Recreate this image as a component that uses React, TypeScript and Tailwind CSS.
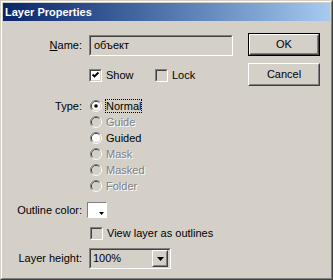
import type { ReactNode } from 'react'

function Sunken({ className = '', inner = '', children }: { className?: string; inner?: string; children?: ReactNode }) {
  return (
    <span className={`flex border border-t-[#808080] border-l-[#808080] border-b-white border-r-white ${className}`}>
      <span className={`flex flex-1 border border-t-[#404040] border-l-[#404040] border-b-[#d4d0c8] border-r-[#d4d0c8] ${inner}`}>
        {children}
      </span>
    </span>
  )
}

function Raised({ className = '', children }: { className?: string; children?: ReactNode }) {
  return (
    <span className={`flex border border-t-white border-l-white border-b-[#404040] border-r-[#404040] ${className}`}>
      <span className="flex flex-1 items-center justify-center border border-t-[#d4d0c8] border-l-[#d4d0c8] border-b-[#808080] border-r-[#808080]">
        {children}
      </span>
    </span>
  )
}

function CheckBox({ checked = false, label }: { checked?: boolean; label: string }) {
  return (
    <span className="flex items-center whitespace-nowrap">
      <Sunken className="h-[13px] w-[13px]" inner={checked ? 'bg-white' : 'bg-[#d4d0c8]'}>
        {checked ? (
          <svg width="9" height="9" viewBox="0 0 9 9">
            <path d="M1.5 3.5 L3.5 5.5 L7.5 1.5" fill="none" stroke="#000" strokeWidth="1.8" />
          </svg>
        ) : null}
      </Sunken>
      <span className="ml-[4px]">{label}</span>
    </span>
  )
}

function Radio({ label, selected = false, disabled = false }: { label: string; selected?: boolean; disabled?: boolean }) {
  return (
    <div className="flex h-[16px] items-center pl-[1px]">
      <svg width="12" height="12" viewBox="0 0 12 12">
        <path d="M2.11 9.89 A5.5 5.5 0 0 1 9.89 2.11" fill="none" stroke="#808080" />
        <path d="M9.89 2.11 A5.5 5.5 0 0 1 2.11 9.89" fill="none" stroke="#fff" />
        <path d="M2.82 9.18 A4.5 4.5 0 0 1 9.18 2.82" fill="none" stroke="#404040" />
        <path d="M9.18 2.82 A4.5 4.5 0 0 1 2.82 9.18" fill="none" stroke="#d4d0c8" />
        <circle cx="6" cy="6" r="4" fill={disabled ? '#d4d0c8' : '#fff'} />
        {selected ? <circle cx="6" cy="6" r="1.8" fill="#000" /> : null}
      </svg>
      {selected ? (
        <span className="ml-[3px] border border-dotted border-black leading-[12px]">{label}</span>
      ) : (
        <span className={`ml-[4px] ${disabled ? 'text-[#808080] [text-shadow:1px_1px_0_#fff]' : ''}`}>{label}</span>
      )}
    </div>
  )
}

function Label({ children }: { children: ReactNode }) {
  return <span className="w-[80px] shrink-0 whitespace-nowrap text-right">{children}</span>
}

export default function App() {
  return (
    <div className="h-[280px] w-[333px] border border-t-[#d4d0c8] border-l-[#d4d0c8] border-b-[#404040] border-r-[#404040] font-['Liberation_Sans',Arial,sans-serif] text-[11px] text-black">
      <div className="flex h-full flex-col border border-t-white border-l-white border-b-[#808080] border-r-[#808080] bg-[#d4d0c8]">
        <div className="m-[1px] mb-0 flex h-[18px] items-center bg-linear-to-r from-[#0a246a] to-[#a6caf0] pl-[2px] font-bold text-white">
          Layer Properties
        </div>

        <div className="flex flex-1">
          <div className="flex flex-col">
            <div className="mt-[14px] flex h-[21px] items-center">
              <Label>
                <span className="underline">N</span>ame:
              </Label>
              <Sunken className="ml-[7px] h-[21px] w-[144px]" inner="items-center pl-[3px]">
                объект
              </Sunken>
            </div>

            <div className="mt-[13px] flex h-[13px] items-center pl-[87px]">
              <span className="w-[66px]">
                <CheckBox checked label="Show" />
              </span>
              <CheckBox label="Lock" />
            </div>

            <div className="mt-[16px] flex">
              <Label>
                <span className="flex h-[16px] items-center justify-end">Type:</span>
              </Label>
              <div className="ml-[7px] flex flex-col">
                <Radio label="Normal" selected />
                <Radio label="Guide" disabled />
                <Radio label="Guided" />
                <Radio label="Mask" disabled />
                <Radio label="Masked" disabled />
                <Radio label="Folder" disabled />
              </div>
            </div>

            <div className="mt-[8px] flex h-[16px] items-center">
              <Label>Outline color:</Label>
              <span className="relative ml-[5px] h-[16px] w-[20px] border border-t-[#808080] border-l-[#808080] border-b-white border-r-white bg-white">
                <svg className="absolute bottom-[2px] right-[2px]" width="5" height="3" viewBox="0 0 5 3">
                  <path d="M0 0 H5 L2.5 3 Z" fill="#000" />
                </svg>
              </span>
            </div>

            <div className="mt-[9px] flex h-[13px] items-center pl-[88px]">
              <CheckBox label="View layer as outlines" />
            </div>

            <div className="mt-[8px] flex h-[21px] items-center">
              <Label>Layer height:</Label>
              <Sunken className="ml-[7px] h-[21px] w-[82px]" inner="items-center justify-between pl-[2px]">
                <span>100%</span>
                <Raised className="mr-[1px] h-[17px] w-[16px]">
                  <svg width="7" height="4" viewBox="0 0 7 4">
                    <path d="M0 0 H7 L3.5 4 Z" fill="#000" />
                  </svg>
                </Raised>
              </Sunken>
            </div>
          </div>

          <div className="ml-auto mr-[11px] mt-[12px] flex w-[72px] flex-col gap-[7px]">
            <span className="flex h-[23px] border border-black">
              <Raised className="flex-1">OK</Raised>
            </span>
            <Raised className="h-[23px]">Cancel</Raised>
          </div>
        </div>
      </div>
    </div>
  )
}
